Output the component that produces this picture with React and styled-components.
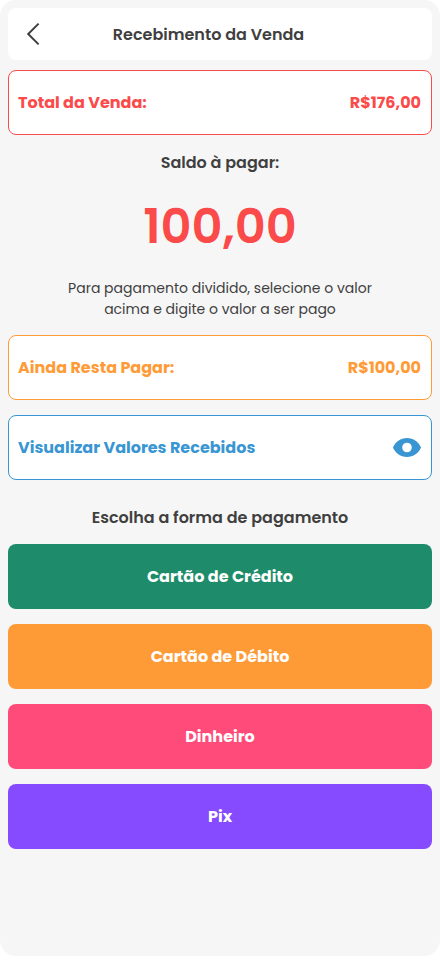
import React from "react";
import styled, { createGlobalStyle } from "styled-components";

const colors = {
  text: "#3f3f3f",
  red: "#fa4a4a",
  orange: "#ff9b37",
  blue: "#3996d3",
  green: "#1e8c6a",
  pink: "#ff4b79",
  purple: "#864bff",
};

const GlobalStyle = createGlobalStyle`
  * {
    box-sizing: border-box;
  }

  body {
    margin: 0;
    background: #fff;
    color: ${colors.text};
    font-family: Poppins, Inter, "Open Sans", sans-serif;
  }

  button {
    border: none;
    font: inherit;
    cursor: pointer;
  }
`;

const Screen = styled.main`
  min-height: 956px;
  padding: 8px;
  border-radius: 16px;
  background: #f6f6f6;
`;

const Header = styled.header`
  display: grid;
  grid-template-columns: 50px 1fr 73px;
  align-items: center;
  height: 52px;
  border-radius: 8px;
  background: #fff;
`;

const BackButton = styled.button`
  display: flex;
  justify-content: center;
  padding: 0;
  background: none;
  color: inherit;
`;

const Title = styled.h1`
  margin: 0;
  padding-top: 2px;
  font-size: 16px;
  font-weight: 600;
  line-height: 24px;
  text-align: center;
`;

const Card = styled.section`
  display: flex;
  align-items: center;
  justify-content: space-between;
  height: 65px;
  margin-top: ${({ $top }) => $top}px;
  padding: 0 10px 0 9px;
  border: 1px solid ${({ $color }) => $color};
  border-radius: 8px;
  background: #fff;
  color: ${({ $color }) => $color};
`;

const Label = styled.span`
  display: block;
  padding-top: 1px;
  font-size: 16px;
  font-weight: 700;
  line-height: 24px;
  white-space: nowrap;
`;

const Balance = styled.section`
  padding-top: 14px;
  text-align: center;
`;

const Amount = styled.p`
  margin: 15px 0 14px;
  color: ${colors.red};
  font-size: 48px;
  font-weight: 600;
  line-height: 74px;
`;

const Hint = styled.p`
  margin: 0;
  font-size: 14px;
  line-height: 21px;
`;

const HintLine = styled.span`
  display: block;
`;

const Methods = styled.section`
  display: flex;
  flex-direction: column;
  gap: 15px;
  padding-top: 24px;
`;

const MethodsTitle = styled(Title)`
  height: 25px;
`;

const MethodButton = styled.button`
  height: 65px;
  border-radius: 8px;
  background: ${({ $color }) => $color};
  color: #fff;
`;

const methods = [
  { label: "Cartão de Crédito", color: colors.green },
  { label: "Cartão de Débito", color: colors.orange },
  { label: "Dinheiro", color: colors.pink },
  { label: "Pix", color: colors.purple },
];

function BackIcon() {
  return (
    <svg width="14" height="24" viewBox="0 0 14 24" fill="none" aria-hidden="true">
      <path d="M12.6 1.6 2.2 12l10.4 10.4" stroke="currentColor" strokeWidth="2" />
    </svg>
  );
}

function EyeIcon() {
  return (
    <svg width="28" height="19" viewBox="0 0 28 19" aria-hidden="true">
      <path
        fill="currentColor"
        fillRule="evenodd"
        d="M14 0C7.6 0 2.2 3.9 0 9.5c2.2 5.6 7.6 9.5 14 9.5s11.8-3.9 14-9.5C25.8 3.9 20.4 0 14 0Zm0 4.7a4.8 4.8 0 1 1 0 9.6 4.8 4.8 0 0 1 0-9.6Z"
      />
    </svg>
  );
}

function App() {
  return (
    <>
      <GlobalStyle />
      <Screen>
        <Header>
          <BackButton aria-label="Voltar">
            <BackIcon />
          </BackButton>
          <Title>Recebimento da Venda</Title>
        </Header>
        <Card $color={colors.red} $top={10}>
          <Label>Total da Venda:</Label>
          <Label>R$176,00</Label>
        </Card>
        <Balance>
          <Title as="h2">Saldo à pagar:</Title>
          <Amount>100,00</Amount>
          <Hint>
            <HintLine>Para pagamento dividido, selecione o valor</HintLine>
            <HintLine>acima e digite o valor a ser pago</HintLine>
          </Hint>
        </Balance>
        <Card $color={colors.orange} $top={15}>
          <Label>Ainda Resta Pagar:</Label>
          <Label>R$100,00</Label>
        </Card>
        <Card $color={colors.blue} $top={15}>
          <Label>Visualizar Valores Recebidos</Label>
          <EyeIcon />
        </Card>
        <Methods>
          <MethodsTitle as="h2">Escolha a forma de pagamento</MethodsTitle>
          {methods.map(({ label, color }) => (
            <MethodButton key={label} $color={color}>
              <Label>{label}</Label>
            </MethodButton>
          ))}
        </Methods>
      </Screen>
    </>
  );
}

export default App;
